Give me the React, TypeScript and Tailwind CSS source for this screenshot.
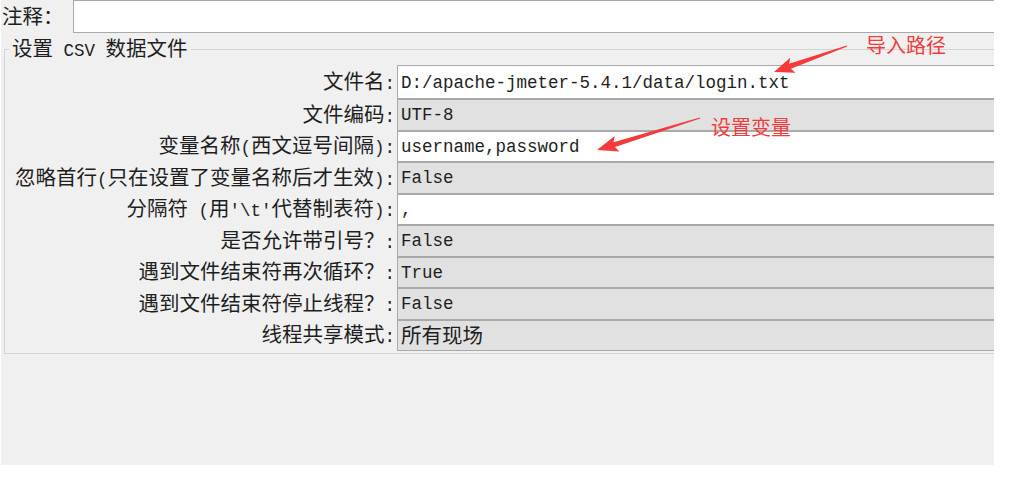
import React from "react";

type Pt = [number, number];

// tapered screenshot-style arrow: thin tail, wider shaft near head, swept barbs
const arrowPoints = (tail: Pt, tip: Pt, headLen: number, headHalf: number, shaft: number) => {
  const dx = tip[0] - tail[0];
  const dy = tip[1] - tail[1];
  const len = Math.hypot(dx, dy);
  const ux = dx / len;
  const uy = dy / len;
  const nx = -uy;
  const ny = ux;
  const bx = tip[0] - ux * headLen;
  const by = tip[1] - uy * headLen;
  const sweep = 3;
  const pts: Pt[] = [
    [tail[0] + nx * 0.6, tail[1] + ny * 0.6],
    [bx + nx * shaft, by + ny * shaft],
    [bx - ux * sweep + nx * headHalf, by - uy * sweep + ny * headHalf],
    tip,
    [bx - ux * sweep - nx * headHalf, by - uy * sweep - ny * headHalf],
    [bx - nx * shaft, by - ny * shaft],
    [tail[0] - nx * 0.6, tail[1] - ny * 0.6],
  ];
  return pts.map((p) => `${p[0].toFixed(1)},${p[1].toFixed(1)}`).join(" ");
};

// half-width (ascii) chars are narrower than the CJK ones, like SimSun
const Mixed = ({ text }: { text: string }) => (
  <span className="whitespace-pre leading-[24px]">
    {text.split(/([\x20-\x7e]+)/).map((s, i) =>
      s === "" ? null : /^[\x20-\x7e]+$/.test(s) ? (
        <span key={i} className="font-['Liberation_Mono','Noto_Sans_CJK_SC',monospace] text-[17.5px]">
          {s}
        </span>
      ) : (
        <span key={i} className="font-['Noto_Sans_CJK_SC',sans-serif] text-[20.5px]">
          {s}
        </span>
      )
    )}
  </span>
);

const rows: { label: string; value: string; editable: boolean }[] = [
  { label: "文件名:", value: "D:/apache-jmeter-5.4.1/data/login.txt", editable: true },
  { label: "文件编码:", value: "UTF-8", editable: false },
  { label: "变量名称(西文逗号间隔):", value: "username,password", editable: true },
  { label: "忽略首行(只在设置了变量名称后才生效):", value: "False", editable: false },
  { label: "分隔符 (用'\\t'代替制表符):", value: ",", editable: true },
  { label: "是否允许带引号？:", value: "False", editable: false },
  { label: "遇到文件结束符再次循环？:", value: "True", editable: false },
  { label: "遇到文件结束符停止线程？:", value: "False", editable: false },
  { label: "线程共享模式:", value: "所有现场", editable: false },
];

export default function App() {
  return (
    <div className="relative w-[1032px] h-[480px] bg-white overflow-hidden text-[#1e1e1e]">
      <div className="ml-[1px] w-[993px] h-[465px] bg-[#f0f0f0] overflow-hidden">
        <div className="flex h-[33px] items-center">
          <div className="w-[72px] pl-[1px] shrink-0">
            <Mixed text="注释：" />
          </div>
          <div className="w-[960px] h-[33px] shrink-0 bg-white border border-[#a9a9a9]" />
        </div>

        {/* titled border group */}
        <div className="mt-[4px] ml-[3px] w-[1010px]">
          <div className="flex h-[24px]">
            <div className="w-[5px] h-[12px] self-end border-t border-l border-[#d4d4d4]" />
            <div className="px-[3px] flex items-center">
              <Mixed text="设置 CSV 数据文件" />
            </div>
            <div className="flex-1 h-[12px] self-end border-t border-[#d4d4d4]" />
          </div>
          <div className="border-l border-r border-b border-[#d4d4d4] pt-[4px] pb-[2px]">
            {rows.map((r, i) => (
              <div key={i} className={`flex ${i === 0 ? "h-[34px]" : "h-[31.5px]"}`}>
                <div className="w-[392px] shrink-0 flex items-center justify-end pr-[2px]">
                  <Mixed text={r.label} />
                </div>
                <div
                  className={`flex-1 flex items-center pl-[3px] border border-[#a9a9a9] ${
                    r.editable ? "bg-white" : "bg-[#e1e1e1]"
                  }`}
                >
                  <Mixed text={r.value} />
                </div>
              </div>
            ))}
          </div>
        </div>
      </div>

      <svg className="absolute left-0 top-0 pointer-events-none" width="1032" height="480">
        <polygon points={arrowPoints([847, 46], [774, 72], 17, 8, 2.6)} fill="#f43a3a" />
        <polygon points={arrowPoints([700, 118], [597, 150], 18, 8, 2.6)} fill="#f43a3a" />
      </svg>
      <div className="absolute left-[866px] top-[33px] leading-[24px] text-[20px] text-[#f23c3c] font-['Noto_Sans_CJK_SC',sans-serif]">
        导入路径
      </div>
      <div className="absolute left-[711px] top-[115px] leading-[24px] text-[20px] text-[#f23c3c] font-['Noto_Sans_CJK_SC',sans-serif]">
        设置变量
      </div>
    </div>
  );
}
